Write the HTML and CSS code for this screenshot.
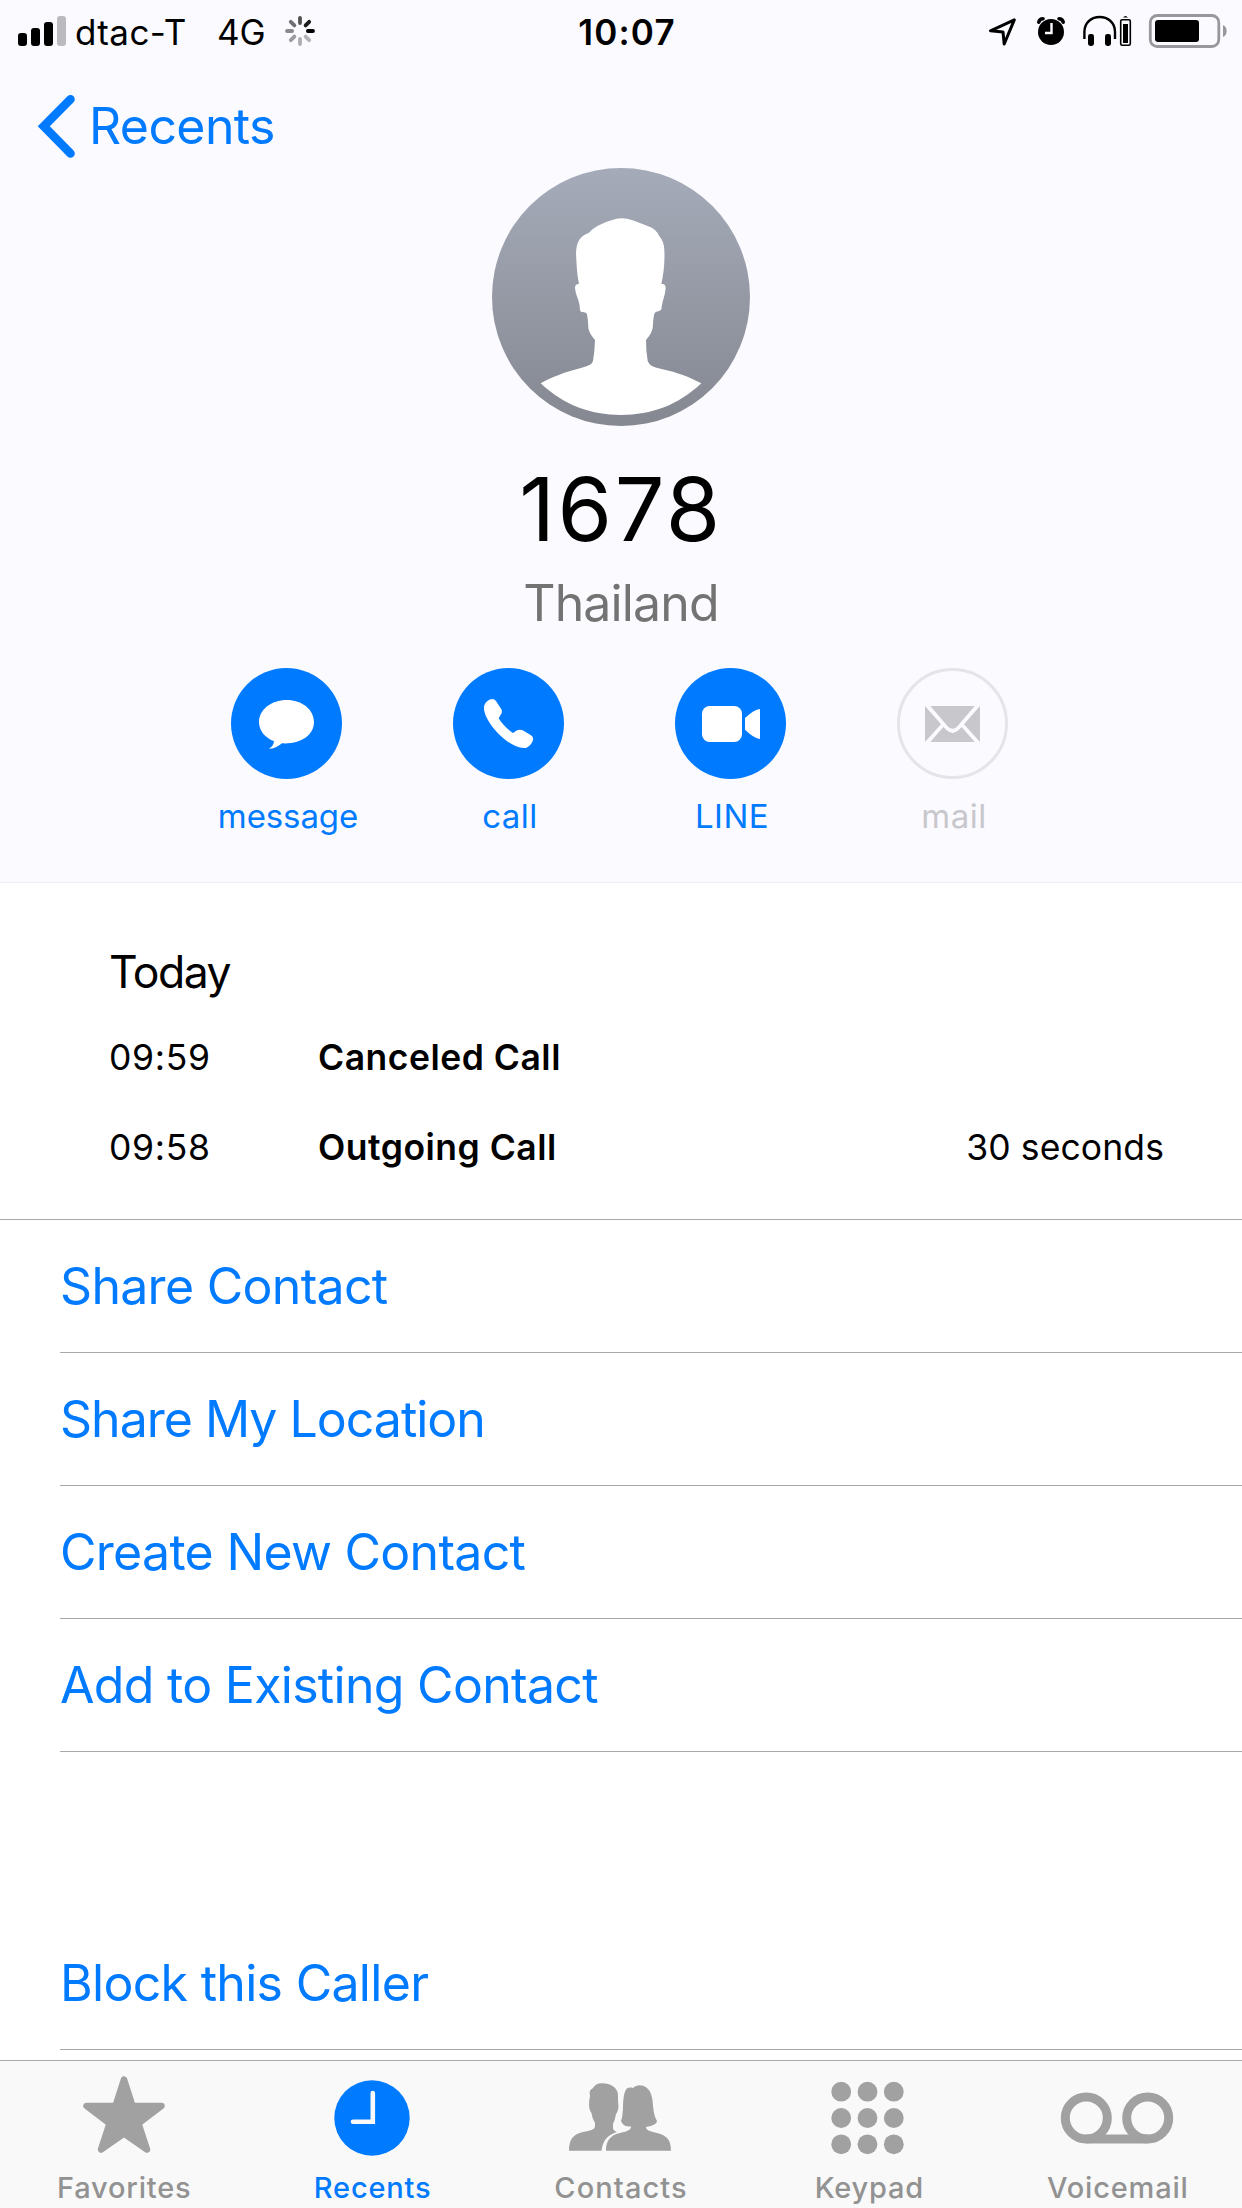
FILE: index.html
```
<!DOCTYPE html>
<html lang="en">
<head>
  <meta charset="UTF-8">
  <meta name="viewport" content="width=device-width, initial-scale=1.0">
  <title>1678</title>
  <link rel="stylesheet" href="styles.css">
</head>
<body>
  <header class="header">
    <div class="status-bar">
      <div class="status-left">
        <svg class="signal" width="48" height="30" viewBox="0 0 48 30">
          <rect x="0" y="17" width="9" height="13" rx="3"/>
          <rect x="13" y="12" width="9" height="18" rx="3"/>
          <rect x="26" y="6" width="9" height="24" rx="3"/>
          <rect x="39" y="0" width="9" height="30" rx="3" fill="#bbbabf"/>
        </svg>
        <span class="carrier">dtac-T</span>
        <span class="network">4G</span>
        <svg class="spinner" width="30" height="30" viewBox="-15 -15 30 30" stroke-width="3.8" stroke-linecap="round">
          <path d="M0-7.9V-13" stroke="#505050"/>
          <path d="M5.6-5.6L9.2-9.2" stroke="#1c1c1c"/>
          <path d="M7.9 0H13" stroke="#000"/>
          <path d="M5.6 5.6L9.2 9.2" stroke="#b4b4b6"/>
          <path d="M0 7.9V13" stroke="#adadaf"/>
          <path d="M-5.6 5.6L-9.2 9.2" stroke="#9c9c9e"/>
          <path d="M-7.9 0H-13" stroke="#8a8a8c"/>
          <path d="M-5.6-5.6L-9.2-9.2" stroke="#707072"/>
        </svg>
      </div>
      <span class="clock">10:07</span>
      <svg class="status-icons" width="240" height="36" viewBox="988 12 240 36">
        <!-- location -->
        <path d="M1014.3 18.8L990.5 29.8L1003 31L1004.2 43Z" fill="none" stroke="#000" stroke-width="3" stroke-linejoin="round"/>
        <!-- alarm -->
        <circle cx="1051" cy="31" r="13"/>
        <path d="M1038.8 21.2Q1039.5 17.8 1043 17.8M1063.2 21.2Q1062.5 17.8 1059 17.8" fill="none" stroke="#000" stroke-width="3.6" stroke-linecap="round"/>
        <path d="M1051.5 22V32H1045" fill="none" stroke="#fbfaff" stroke-width="2.4"/>
        <!-- headphones -->
        <path d="M1084.4 38V31C1084.4 11 1115 11 1115 31V38" fill="none" stroke="#000" stroke-width="2.4"/>
        <rect x="1088" y="33" width="6" height="12" rx="2.4"/>
        <rect x="1105" y="33" width="6" height="12" rx="2.4"/>
        <rect x="1120.7" y="18.7" width="9.6" height="25.6" rx="1.5" fill="none" stroke="#000" stroke-width="1.6"/>
        <rect x="1123" y="23" width="5" height="19"/>
        <path d="M1123 16.6Q1125.5 13.4 1128 16.6Z"/>
        <!-- battery -->
        <rect x="1150.3" y="14.5" width="68.5" height="31" rx="7" fill="none" stroke="#98979b" stroke-width="2.8"/>
        <rect x="1155" y="19" width="44" height="22" rx="3"/>
        <path d="M1223 24Q1226.6 25.5 1226.6 30T1223 36Z" fill="#98979b"/>
      </svg>
    </div>

    <a href="#" class="back-btn">
      <svg width="40" height="64" viewBox="36 94 40 64">
        <path d="M70.5 99.3L43.8 126.3L70.5 153.4" fill="none" stroke="#007aff" stroke-width="8.6" stroke-linecap="round"/>
      </svg>
      <span class="back-label">Recents</span>
    </a>

    <svg class="avatar" width="258" height="258" viewBox="66 54 774 774">
      <defs>
        <linearGradient id="avatarBg" x1="0" y1="0" x2="0" y2="1">
          <stop offset="0" stop-color="#a5abb9"/>
          <stop offset="1" stop-color="#858891"/>
        </linearGradient>
      </defs>
      <circle cx="453" cy="441" r="387" fill="url(#avatarBg)"/>
      <path fill="#fff" d="M212 700C250 680 285 666 330 655C352 648 366 645 369 632Q374 605 375 570Q359 553 355 535Q354 505 350 490C344 484 332 490 330 480Q329 462 325 450C318 433 315 420 315 410Q317 400 327 402C320 370 320 340 318 312Q318 260 356 249C372 232 390 222 425 211Q454 198 488 211L533 228Q560 237 568 259Q582 274 583 300C585 340 580 375 574 402Q587 400 587 415Q586 432 578 455Q575 468 574 478C568 488 555 480 552 495Q549 512 548 535Q544 553 528 570Q528 605 533 632C538 648 552 651 575 657C625 668 655 680 694 700C625 765 545 795 453 795C361 795 281 765 212 700Z"/>
    </svg>
    <h1 class="name">1678</h1>
    <p class="region">Thailand</p>

    <div class="actions">
      <a href="#" class="action">
        <svg width="111" height="111" viewBox="93 84 333 333">
          <circle cx="259.5" cy="250.5" r="166.5" fill="#007aff"/>
          <path fill="#fff" d="M260 180C306 180 342 209 342 246C342 284 305 313 246 310C235 319 222 327 207 326C216 321 221 313 222 304C194 292 177 272 177 246C177 209 214 180 260 180Z"/>
        </svg>
        <span class="action-label tight">message</span>
      </a>
      <a href="#" class="action">
        <svg width="111" height="111" viewBox="759 84 333 333">
          <circle cx="925.5" cy="250.5" r="166.5" fill="#007aff"/>
          <path fill="#fff" d="M868 179Q881 173 888 183L904 208Q908 215 903 223L896 235C905 251 922 268 939 279L951 271Q960 267 968 271L993 286Q1001 291 999 301Q993 317 980 323C955 328 923 309 896 282C869 254 850 222 852 201Q853 187 868 179Z"/>
        </svg>
        <span class="action-label">call</span>
      </a>
      <a href="#" class="action">
        <svg width="111" height="111" viewBox="165 84 333 333">
          <circle cx="331.5" cy="250.5" r="166.5" fill="#007aff"/>
          <rect x="246" y="198" width="120" height="108" rx="23" fill="#fff"/>
          <path fill="#fff" d="M375 234Q402 209 420 207V297Q402 295 375 269Z"/>
        </svg>
        <span class="action-label">LINE</span>
      </a>
      <div class="action disabled">
        <svg width="111" height="111" viewBox="831 84 333 333">
          <circle cx="997.5" cy="250.5" r="162" fill="none" stroke="#e5e4e9" stroke-width="9"/>
          <path fill="#c8c7cc" d="M915 198L963 253L915 306ZM1080 198L1032 253L1080 306ZM931 198H1064L1012 259Q998 274 983 259ZM931 306L970 261L980 271Q998 287 1015 271L1025 261L1064 306Z"/>
        </svg>
        <span class="action-label">mail</span>
      </div>
    </div>
  </header>

  <main class="content">
    <section class="history">
      <h2 class="day">Today</h2>
      <div class="call-row">
        <span class="call-time">09:59</span>
        <span class="call-type">Canceled Call</span>
      </div>
      <div class="call-row">
        <span class="call-time">09:58</span>
        <span class="call-type">Outgoing Call</span>
        <span class="call-duration">30 seconds</span>
      </div>
    </section>

    <nav class="options">
      <a href="#" class="option">Share Contact</a>
      <a href="#" class="option location">Share My Location</a>
      <a href="#" class="option">Create New Contact</a>
      <a href="#" class="option">Add to Existing Contact</a>
      <a href="#" class="option block">Block this Caller</a>
    </nav>
  </main>

  <footer class="tab-bar">
    <a href="#" class="tab">
      <svg width="110" height="90" viewBox="69 2070 110 90">
        <path d="M124 2079.5L132.5 2106H161.5L138.5 2123.5L147 2149.5L124 2133.5L101 2149.5L109.5 2123.5L86.5 2106H115.5Z" fill="#a1a1a1" stroke="#a1a1a1" stroke-width="6.5" stroke-linejoin="round"/>
      </svg>
      <span class="tab-label">Favorites</span>
    </a>
    <a href="#" class="tab active">
      <svg width="110" height="90" viewBox="318 2070 110 90">
        <circle cx="372" cy="2118" r="37.7" fill="#007aff"/>
        <path d="M372.8 2093V2121.7H353" fill="none" stroke="#f9f9f9" stroke-width="4.6" stroke-linecap="round"/>
      </svg>
      <span class="tab-label">Recents</span>
    </a>
    <a href="#" class="tab">
      <svg width="110" height="90" viewBox="566 2070 110 90" fill="#a1a1a1">
        <path d="M569 2150.7C569 2140 573 2134 583 2132C590 2130.5 595 2130 595 2126V2123Q592 2118 591.5 2113Q589.5 2111 589 2105Q589 2101 590 2096Q588.5 2090 592.5 2088.5Q596 2083 602 2083.3Q610 2083.5 614 2087Q618.5 2090 618 2099Q618 2103 618.5 2106Q618 2112 616 2114Q615 2120 613 2124V2128Q613 2130.5 617 2132Q603 2136 601.5 2150.7Z"/>
        <path d="M606 2150.7C606 2142 609 2135.5 620 2133C628 2131 631 2130 631 2126.5Q623 2127 621 2121Q623 2116 623 2105C624 2092 625 2086 633 2088C638 2083 648 2085 651 2094C654 2102 652 2113 657 2121Q657 2125 646 2127C646 2130 649 2131 657 2133C667 2135.5 671 2140 671 2150.7Z"/>
      </svg>
      <span class="tab-label wide">Contacts</span>
    </a>
    <a href="#" class="tab">
      <svg width="110" height="90" viewBox="814 2070 110 90" fill="#a1a1a1">
        <circle cx="841.2" cy="2091.7" r="9.9"/>
        <circle cx="867.5" cy="2091.7" r="9.9"/>
        <circle cx="893.8" cy="2091.7" r="9.9"/>
        <circle cx="841.2" cy="2118" r="9.9"/>
        <circle cx="867.5" cy="2118" r="9.9"/>
        <circle cx="893.8" cy="2118" r="9.9"/>
        <circle cx="841.2" cy="2144.3" r="9.9"/>
        <circle cx="867.5" cy="2144.3" r="9.9"/>
        <circle cx="893.8" cy="2144.3" r="9.9"/>
      </svg>
      <span class="tab-label">Keypad</span>
    </a>
    <a href="#" class="tab">
      <svg width="120" height="90" viewBox="1058 2070 120 90" fill="none" stroke="#a1a1a1" stroke-width="9">
        <circle cx="1086.3" cy="2118" r="21"/>
        <circle cx="1147.7" cy="2118" r="21"/>
        <path d="M1086.3 2139H1147.7"/>
      </svg>
      <span class="tab-label">Voicemail</span>
    </a>
  </footer>
</body>
</html>
```
FILE: styles.css
```
* { margin: 0; padding: 0; box-sizing: border-box; }
body {
  font-family: Inter, 'Liberation Sans', sans-serif;
  background: #fff;
  color: #000;
  width: 1242px;
  height: 2208px;
  display: flex;
  flex-direction: column;
  overflow: hidden;
}
a {
  color: #007aff;
  text-decoration: none;
}
svg {
  display: block;
  flex: none;
}
span, h1, h2, p {
  white-space: nowrap;
}
.header {
  height: 883px;
  background: #fbfaff;
  border-bottom: 1px solid #efeef2;
  display: flex;
  flex-direction: column;
  align-items: center;
}

/* status bar */
.status-bar {
  width: 100%;
  height: 60px;
  padding: 0 14px 0 18px;
  display: grid;
  grid-template-columns: 1fr auto 1fr;
  align-items: center;
  font-size: 35px;
  line-height: 60px;
}
.status-left {
  display: flex;
  align-items: center;
}
.carrier {
  width: 142px;
  margin-left: 9px;
  padding-top: 2px;
  letter-spacing: 0.4px;
}
.network {
  width: 68px;
  padding-top: 2px;
}
.clock {
  padding: 2px 0 0 8px;
  font-weight: 600;
  letter-spacing: 1.2px;
}
.status-icons {
  justify-self: end;
}

.back-btn {
  align-self: flex-start;
  height: 108px;
  padding: 34px 0 0 36px;
  display: flex;
}
.back-label {
  margin-left: 13px;
  font-size: 50px;
  line-height: 64px;
  letter-spacing: -0.6px;
}
.name {
  margin-top: 29px;
  font-size: 88px;
  line-height: 108px;
  font-weight: 400;
  letter-spacing: 2.5px;
}
.region {
  margin-top: 9px;
  font-size: 50px;
  line-height: 62px;
  letter-spacing: -0.85px;
  color: #737373;
}
.actions {
  margin: 34px 3px 0 0;
  display: flex;
  gap: 111px;
}
.action {
  width: 111px;
  display: flex;
  flex-direction: column;
  align-items: center;
}
.action-label {
  margin-top: 16px;
  padding-left: 3px;
  font-size: 33px;
  line-height: 42px;
  letter-spacing: 0.5px;
}
.tight {
  letter-spacing: -0.1px;
}
.disabled {
  color: #c8c7cc;
}

/* call history */
.history {
  height: 337px;
  padding: 62px 78px 0 109px;
  border-bottom: 1px solid #a9a9ab;
}
.day {
  font-size: 44.5px;
  line-height: 54px;
  font-weight: 400;
  letter-spacing: -1.5px;
}
.call-row {
  display: flex;
  height: 90px;
  line-height: 90px;
  font-size: 35.5px;
}
.day + .call-row {
  margin-top: 14px;
}
.call-time {
  width: 209px;
  letter-spacing: 0.7px;
}
.call-type {
  font-weight: 600;
  letter-spacing: 0.5px;
}
.call-duration {
  margin-left: auto;
  letter-spacing: 0.1px;
}

.option {
  display: block;
  height: 133px;
  margin-left: 60px;
  border-bottom: 1px solid #a9a9ab;
  font-size: 50px;
  line-height: 133px;
  letter-spacing: -0.7px;
}
.location {
  letter-spacing: -1px;
}
.block {
  height: 298px;
  padding-top: 165px;
}

.tab-bar {
  margin-top: auto;
  height: 148px;
  background: #f9f9f9;
  border-top: 1px solid #a9a9ab;
  display: flex;
}
.tab {
  flex: 1;
  padding-top: 9px;
  display: flex;
  flex-direction: column;
  align-items: center;
  color: #929292;
}
.tab-label {
  margin-top: 10px;
  font-size: 29px;
  line-height: 36px;
  font-weight: 500;
  letter-spacing: 0.8px;
}
.wide {
  letter-spacing: 1.1px;
}
.active {
  color: #007aff;
}
```
